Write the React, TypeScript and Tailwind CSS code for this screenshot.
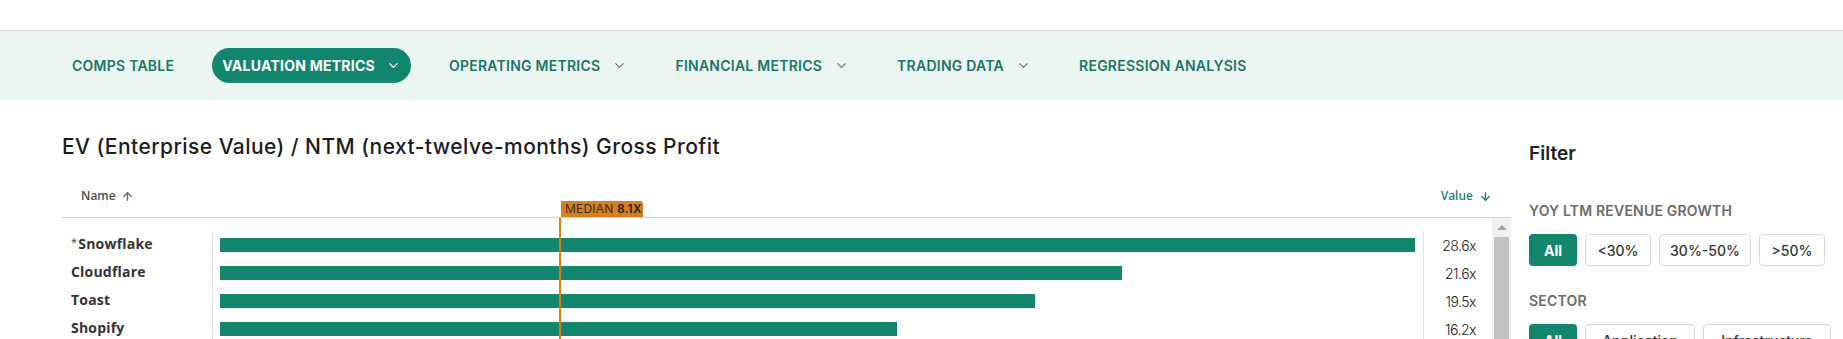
import { ChevronDown, ArrowUp, ArrowDown } from "lucide-react";

type Row = { name: string; value: number; star?: boolean };

const rows: Row[] = [
  { name: "Snowflake", value: 28.6, star: true },
  { name: "Cloudflare", value: 21.6 },
  { name: "Toast", value: 19.5 },
  { name: "Shopify", value: 16.2 },
];

const navItems = [
  { label: "COMPS TABLE", menu: false, active: false },
  { label: "VALUATION METRICS", menu: true, active: true },
  { label: "OPERATING METRICS", menu: true, active: false },
  { label: "FINANCIAL METRICS", menu: true, active: false },
  { label: "TRADING DATA", menu: true, active: false },
  { label: "REGRESSION ANALYSIS", menu: false, active: false },
];

// px per 1.0x on the chart
const SCALE = 41.78;

type Opt = { label: string; w: string };

function FilterGroup({ title, options }: { title: string; options: Opt[] }) {
  return (
    <div>
      <div className="text-[14px] leading-[20px] font-semibold text-[#6b6b6b] tracking-[0.2px]">{title}</div>
      <div className="flex gap-2 mt-[13px]">
        {options.map((o, i) => (
          <button
            key={o.label}
            className={
              i === 0
                ? `${o.w} h-[32px] flex items-center justify-center rounded-[4px] bg-[#13866f] text-white text-[14px] font-bold`
                : `${o.w} h-[32px] flex items-center justify-center rounded-[4px] border border-[#dddbd4] bg-white text-[#333] text-[14px] font-medium`
            }
          >
            {o.label}
          </button>
        ))}
      </div>
    </div>
  );
}

export default function App() {
  return (
    <div className="w-full h-[339px] overflow-hidden bg-white font-['Inter',sans-serif] text-[#222]">
      <div className="h-[31px] border-b border-[#dcdad2]" />

      {/* tabs */}
      <div className="h-[69px] bg-[#ebf6f3] flex items-center pl-[62px] gap-[28px]">
        {navItems.map((n) => (
          <div
            key={n.label}
            className={
              n.active
                ? "h-[35px] flex items-center px-[10px] rounded-full bg-[#13866f] text-white text-[14px] font-bold tracking-[0.25px]"
                : "h-[35px] flex items-center px-[10px] text-[#1b7566] text-[14px] font-semibold tracking-[0.25px]"
            }
          >
            {n.label}
            {n.menu && (
              <ChevronDown
                size={15}
                strokeWidth={2}
                className={n.active ? "ml-[11px] text-white" : "ml-[12px] text-[#6d7775]"}
              />
            )}
          </div>
        ))}
      </div>

      <div className="flex pl-[62px]">
        {/* chart */}
        <div className="w-[1449px] shrink-0 relative">
          <h1 className="pt-[33px] text-[21px] leading-[28px] font-medium tracking-[0.45px] text-[#1c1c1c]">
            EV (Enterprise Value) / NTM (next-twelve-months) Gross Profit
          </h1>

          <div className="relative h-[57px] pt-[14px] flex items-center border-b border-[#cfcfcf] font-['Open_Sans',sans-serif]">
            <div className="pl-[19px] flex items-center gap-[5px] text-[12px] font-semibold text-[#4a4a4a]">
              Name
              <ArrowUp size={13} strokeWidth={2.5} className="text-[#666]" />
            </div>
            <div className="ml-auto mr-[19px] flex items-center gap-[6px] text-[12px] font-semibold text-[#1f7f70]">
              Value
              <ArrowDown size={13} strokeWidth={2.5} className="text-[#13866f]" />
            </div>
            <div className="absolute bottom-0 left-[499px] h-[16px] w-[82px] px-[4px] flex items-center bg-[#d5801f] rounded-tr-[3px] text-[12px] leading-none tracking-[0.2px] text-[#3b2a12] font-['Inter',sans-serif]">
              MEDIAN&nbsp;<span className="font-semibold text-[#1e1a14]">8.1X</span>
            </div>
          </div>

          <div className="relative flex">
            <div className="flex-1 flex pt-[13px]">
              <div className="w-[151px] border-r border-[#e2e2e2] font-['Open_Sans',sans-serif]">
                {rows.map((r) => (
                  <div key={r.name} className="h-[28px] flex items-center pl-[9px] pb-[3px] text-[14px] font-bold tracking-[0.2px] text-[#333]">
                    {r.star && <span className="text-[11px] font-normal mr-[1px] -mt-[3px]">*</span>}
                    {r.name}
                  </div>
                ))}
              </div>
              <div className="w-[1211px] border-r border-[#e2e2e2] pl-[7px]">
                {rows.map((r) => (
                  <div key={r.name} className="h-[28px] flex items-center">
                    <div className="h-[14px] bg-[#13866f]" style={{ width: r.value * SCALE }} />
                  </div>
                ))}
              </div>
              <div className="flex-1 pr-[16px]">
                {rows.map((r) => (
                  <div key={r.name} className="h-[28px] flex items-center justify-end text-[14px] font-light tracking-[-0.5px] text-[#222]">
                    {r.value.toFixed(1)}x
                  </div>
                ))}
              </div>
            </div>

            {/* scrollbar */}
            <div className="w-[19px] h-[130px] bg-[#f1f1f1] flex flex-col items-center">
              <div className="h-[19px] flex items-center justify-center">
                <div className="w-0 h-0 border-l-[5px] border-r-[5px] border-b-[5px] border-l-transparent border-r-transparent border-b-[#a3a3a3]" />
              </div>
              <div className="w-[15px] flex-1 bg-[#c1c1c1]" />
            </div>

            <div className="absolute top-0 bottom-0 left-[497px] w-[2px] bg-[#d5801f]" />
          </div>
        </div>

        {/* filters */}
        <div className="ml-[18px] pt-[40px] shrink-0">
          <div className="text-[19px] leading-[28px] font-semibold text-[#222]">Filter</div>
          <div className="mt-[33px]">
            <FilterGroup
              title="YOY LTM REVENUE GROWTH"
              options={[
                { label: "All", w: "w-[48px]" },
                { label: "<30%", w: "w-[66px]" },
                { label: "30%-50%", w: "w-[92px]" },
                { label: ">50%", w: "w-[66px]" },
              ]}
            />
          </div>
          <div className="mt-[25px]">
            <FilterGroup
              title="SECTOR"
              options={[
                { label: "All", w: "w-[48px]" },
                { label: "Application", w: "w-[110px]" },
                { label: "Infrastructure", w: "w-[128px]" },
              ]}
            />
          </div>
        </div>
      </div>
    </div>
  );
}
